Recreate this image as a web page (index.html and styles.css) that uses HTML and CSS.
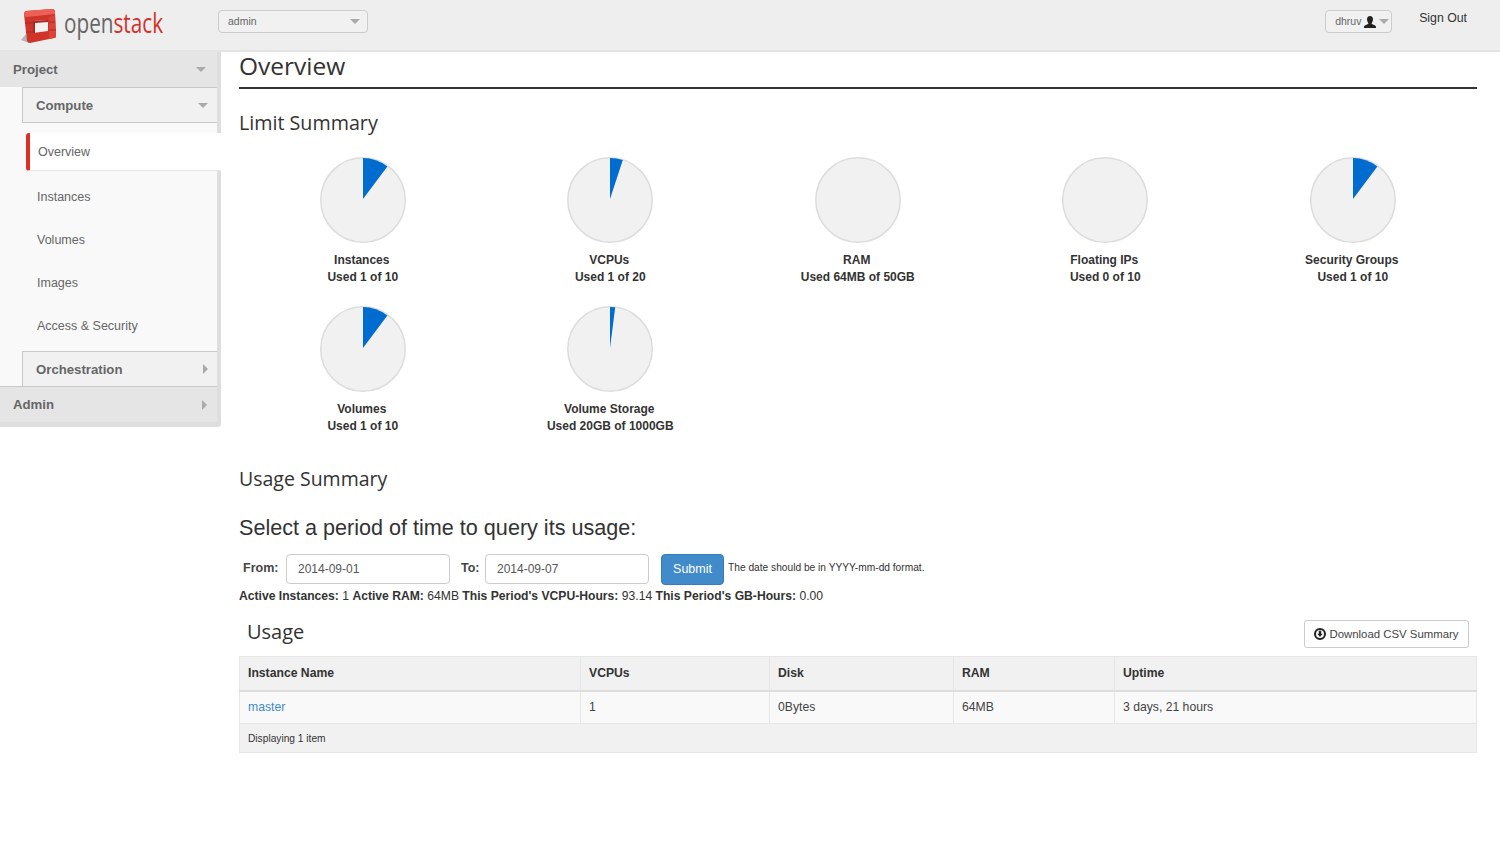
FILE: index.html
```html
<!DOCTYPE html>
<html lang="en">

<head>
  <meta charset="UTF-8">
  <title>Usage Overview - OpenStack Dashboard</title>
  <link rel="stylesheet" href="styles.css">
</head>

<body>
  <header class="topbar">
    <div class="brand">
      <svg class="brand-mark" width="38" height="36" viewBox="0 0 38 36">
        <path d="M1 32l5-6 3 9z" fill="#b5b5b5"/>
        <path d="M4 6q0-2 2-3L32 1q3 0 3 3l1 24q0 2-2 2L10 35q-2 0-3-2z" fill="#cf342a"/>
        <path d="M4 6q0-2 2-3L32 1q3 0 3 3v2L7 9q-3 0-3-3z" fill="#ee5f55"/>
        <path d="M29 9l6-2 1 21q0 2-2 2l-5 1z" fill="#dd4238"/>
        <path d="M13 13l15-1v11l-15 2z" fill="#f4f1f0"/>
        <path d="M13 13l15-1v2l-13 1v10h-2z" fill="#a92a22"/>
        <path d="M5 15h8M6 24h7M29 14h6M29 22h7" stroke="#a92a22" stroke-width="1"/>
      </svg>
      <span class="brand-name">open<span class="brand-red">stack</span></span>
    </div>
    <div class="tenant-select">admin<span class="caret"></span></div>
    <div class="topbar-right">
      <div class="user-select">dhruv
        <svg class="user-icon" width="12" height="12" viewBox="0 0 12 12"><path d="M6 0c2 0 3 1.300 3 3.300S8 6.500 7.500 7.500c.5 1 4.500 1.500 4.500 3.500v1H0v-1c0-2 4-2.500 4.500-3.500C4 6.500 3 5.300 3 3.300S4 0 6 0z" fill="#222"/></svg>
        <span class="caret"></span>
      </div>
      <a class="sign-out">Sign Out</a>
    </div>
  </header>

  <div class="layout">
    <nav class="sidebar">
      <div class="dash-head">Project<span class="caret"></span></div>
      <div class="panel-wrap">
        <div class="group-head">Compute<span class="caret"></span></div>
        <a class="nav-item active">Overview</a>
        <a class="nav-item first">Instances</a>
        <a class="nav-item">Volumes</a>
        <a class="nav-item">Images</a>
        <a class="nav-item last">Access &amp; Security</a>
        <div class="group-head closed">Orchestration<span class="caret-right"></span></div>
      </div>
      <div class="dash-head closed">Admin<span class="caret-right"></span></div>
    </nav>

    <main class="content">
      <h1 class="page-title">Overview</h1>

      <h3 class="section-title">Limit Summary</h3>
      <div class="pies">
        <div class="pie-item">
          <svg class="pie" width="86" height="86" viewBox="0 0 86 86"><circle cx="43" cy="43" r="42.250"/><path d="M43 42V1a41.500 41.500 0 0 1 24.400 8.400z"/></svg>
          <strong class="pie-name">Instances</strong><strong>Used 1 of 10</strong>
        </div>
        <div class="pie-item">
          <svg class="pie" width="86" height="86" viewBox="0 0 86 86"><circle cx="43" cy="43" r="42.250"/><path d="M43 42V1a41.500 41.500 0 0 1 12.800 2z"/></svg>
          <strong class="pie-name">VCPUs</strong><strong>Used 1 of 20</strong>
        </div>
        <div class="pie-item">
          <svg class="pie" width="86" height="86" viewBox="0 0 86 86"><circle cx="43" cy="43" r="42.250"/></svg>
          <strong class="pie-name">RAM</strong><strong>Used 64MB of 50GB</strong>
        </div>
        <div class="pie-item">
          <svg class="pie" width="86" height="86" viewBox="0 0 86 86"><circle cx="43" cy="43" r="42.250"/></svg>
          <strong class="pie-name">Floating IPs</strong><strong>Used 0 of 10</strong>
        </div>
        <div class="pie-item">
          <svg class="pie" width="86" height="86" viewBox="0 0 86 86"><circle cx="43" cy="43" r="42.250"/><path d="M43 42V1a41.500 41.500 0 0 1 24.400 8.400z"/></svg>
          <strong class="pie-name">Security Groups</strong><strong>Used 1 of 10</strong>
        </div>
        <div class="pie-item">
          <svg class="pie" width="86" height="86" viewBox="0 0 86 86"><circle cx="43" cy="43" r="42.250"/><path d="M43 42V1a41.500 41.500 0 0 1 24.400 8.400z"/></svg>
          <strong class="pie-name">Volumes</strong><strong>Used 1 of 10</strong>
        </div>
        <div class="pie-item">
          <svg class="pie" width="86" height="86" viewBox="0 0 86 86"><circle cx="43" cy="43" r="42.250"/><path d="M43 42V1a41.500 41.500 0 0 1 5.200.3z"/></svg>
          <strong class="pie-name">Volume Storage</strong><strong>Used 20GB of 1000GB</strong>
        </div>
      </div>

      <h3 class="section-title usage-title">Usage Summary</h3>
      <h2 class="query-title">Select a period of time to query its usage:</h2>
      <form class="date-form">
        <label class="from-label">From:</label>
        <input class="date-input" type="text" value="2014-09-01">
        <label class="to-label">To:</label>
        <input class="date-input" type="text" value="2014-09-07">
        <button class="submit-btn" type="button">Submit</button>
        <span class="date-hint">The date should be in YYYY-mm-dd format.</span>
      </form>
      <p class="totals"><b>Active Instances:</b> 1 <b>Active RAM:</b> 64MB <b>This Period's VCPU-Hours:</b> 93.14 <b>This Period's GB-Hours:</b> 0.00</p>

      <div class="table-head">
        <h3 class="table-title">Usage</h3>
        <a class="csv-btn">
          <svg width="12" height="12" viewBox="0 0 12 12"><circle cx="6" cy="6" r="5" fill="none" stroke="#222" stroke-width="2"/><path d="M4.800 2.800h2.400v3h1.500L6 9 3.300 5.800h1.500z" fill="#222"/></svg>
          Download CSV Summary
        </a>
      </div>
      <table class="usage-table">
        <thead>
          <tr><th class="col-name">Instance Name</th><th class="col-vcpu">VCPUs</th><th class="col-disk">Disk</th><th class="col-ram">RAM</th><th>Uptime</th></tr>
        </thead>
        <tbody>
          <tr><td><a class="link">master</a></td><td>1</td><td>0Bytes</td><td>64MB</td><td>3 days, 21 hours</td></tr>
        </tbody>
        <tfoot>
          <tr><td colspan="5">Displaying 1 item</td></tr>
        </tfoot>
      </table>
    </main>
  </div>
</body>

</html>
```

FILE: styles.css
```css
* {
  box-sizing: border-box;
}

body {
  font-family: "Liberation Sans", Arial, sans-serif;
  font-size: 13px;
  color: #333;
  background: #fff;
  margin: 0;
  height: 843px;
  overflow: hidden;
}

.caret {
  display: inline-block;
  width: 0;
  height: 0;
  border-left: 5px solid transparent;
  border-right: 5px solid transparent;
  border-top: 5px solid #aaa;
}

.caret-right {
  display: inline-block;
  width: 0;
  height: 0;
  border-top: 5px solid transparent;
  border-bottom: 5px solid transparent;
  border-left: 5px solid #aaa;
}

/* top bar */
.topbar {
  height: 52px;
  background: #eee;
  border-bottom: 2px solid #e3e3e3;
  display: flex;
  align-items: flex-start;
}

.brand {
  width: 218px;
  height: 50px;
  padding: 8px 0 0 20px;
  display: flex;
  align-items: flex-start;
  flex-shrink: 0;
}

.brand-mark {
  flex-shrink: 0;
}

.brand-name {
  font-family: "Open Sans", sans-serif;
  font-size: 28px;
  line-height: 32px;
  color: #666;
  margin: -2px 0 0 6px;
  display: inline-block;
  transform: scaleX(0.74);
  transform-origin: left top;
}

.brand-red {
  color: #d2312a;
}

.tenant-select {
  width: 150px;
  height: 23px;
  margin-top: 10px;
  padding: 0 7px 0 9px;
  background: #f1f1f1;
  border: 1px solid #ccc;
  border-radius: 4px;
  font-size: 10.500px;
  line-height: 21px;
  color: #666;
  display: flex;
  justify-content: space-between;
  align-items: center;
}

.topbar-right {
  margin-left: auto;
  display: flex;
  align-items: flex-start;
  padding-right: 33px;
}

.user-select {
  width: 67px;
  height: 23px;
  margin-top: 10px;
  padding-left: 9px;
  background: #f1f1f1;
  border: 1px solid #ccc;
  border-radius: 4px;
  font-size: 10.500px;
  line-height: 21px;
  color: #666;
  display: flex;
  align-items: center;
  gap: 3px;
}

.user-icon {
  flex-shrink: 0;
}

.sign-out {
  margin: 11px 0 0 27px;
  font-size: 12.300px;
  line-height: 15px;
  color: #333;
}

.layout {
  display: flex;
  align-items: flex-start;
}

/* sidebar */
.sidebar {
  width: 221px;
  flex-shrink: 0;
  background: #dedede;
  padding-bottom: 5px;
  padding-right: 4px;
  border-bottom-right-radius: 3px;
  font-weight: bold;
}

.dash-head {
  height: 35px;
  padding: 0 11px 0 13px;
  background: #e5e5e5;
  color: #666;
  font-size: 13.200px;
  display: flex;
  justify-content: space-between;
  align-items: center;
}

.dash-head.closed {
  height: 36px;
  padding-right: 10px;
  border-top: 1px solid #c9c9c9;
}

.panel-wrap {
  background: #f9f9f9;
  padding-left: 22px;
  font-weight: normal;
}

.group-head {
  height: 36px;
  padding: 0 9px 0 13px;
  background: #f1f1f1;
  border: solid #c9c9c9;
  border-width: 1px 0 1px 1px;
  color: #666;
  font-size: 13.200px;
  font-weight: bold;
  display: flex;
  justify-content: space-between;
  align-items: center;
}

.group-head.closed {
  height: 35px;
  border-bottom: 0;
}

.nav-item {
  display: block;
  height: 43px;
  padding-left: 15px;
  font-size: 12.500px;
  line-height: 43px;
  color: #666;
}

.nav-item.first {
  margin-top: 5px;
}

.nav-item.last {
  margin-bottom: 3px;
}

.nav-item.active {
  position: relative;
  width: 195px;
  height: 38px;
  margin: 10px 0 0 4px;
  padding-left: 8px;
  line-height: 38px;
  background: #fff;
  border-left: 4px solid #dc3024;
  border-bottom: 1px solid #e6e6e6;
  border-radius: 3px 0 0 3px;
}

/* content */
.content {
  flex: 1;
  min-width: 0;
  padding: 0 23px 0 18px;
}

.page-title {
  margin: 0;
  height: 37px;
  font-family: "Open Sans", sans-serif;
  font-size: 24.500px;
  font-weight: 400;
  line-height: 28px;
  color: #333;
  border-bottom: 2px solid #333;
}

.section-title {
  margin: 20px 0 0;
  font-family: "Open Sans", sans-serif;
  font-size: 19.700px;
  font-weight: 400;
  line-height: 28px;
  color: #333;
}

.pies {
  display: flex;
  flex-wrap: wrap;
  margin-top: 20px;
  row-gap: 15px;
}

.pie-item {
  width: 247.500px;
  height: 134px;
  display: flex;
  flex-direction: column;
  align-items: center;
  font-size: 12px;
  line-height: 17px;
  color: #333;
}

.pie-name {
  padding-right: 2px;
}

.pie {
  margin-bottom: 9px;
}

.pie circle {
  fill: #f1f1f1;
  stroke: #ddd;
  stroke-width: 1.500;
}

.pie path {
  fill: #006ccf;
}

.usage-title {
  margin-top: 25px;
  font-size: 19.500px;
}

.query-title {
  margin: 22px 0 0;
  font-size: 21.600px;
  font-weight: 400;
  line-height: 26px;
  color: #333;
}

.date-form {
  display: flex;
  align-items: center;
  margin-top: 13px;
  padding-left: 4px;
  height: 30px;
}

.date-form label {
  font-weight: bold;
  font-size: 12.500px;
  color: #444;
  margin-top: -3px;
}

.from-label {
  width: 43px;
}

.to-label {
  width: 24px;
  margin-left: 11px;
}

.date-input {
  width: 164px;
  height: 30px;
  padding: 0 11px;
  border: 1px solid #ccc;
  border-radius: 4px;
  font: 12px "Liberation Sans", Arial, sans-serif;
  color: #555;
  background: #fff;
}

.submit-btn {
  width: 63px;
  height: 31px;
  margin-left: 12px;
  background: #428bca;
  border: 1px solid #357ebd;
  border-radius: 4px;
  color: #fff;
  font: 12.500px "Liberation Sans", Arial, sans-serif;
  padding: 0;
}

.date-hint {
  margin: 0 0 3px 4px;
  font-size: 10.200px;
  color: #333;
}

.totals {
  margin: 4px 0 0;
  font-size: 12.150px;
  line-height: 16px;
  color: #333;
}

.table-head {
  display: flex;
  justify-content: space-between;
  align-items: center;
  height: 28px;
  margin-top: 16px;
  padding: 0 8px;
}

.table-title {
  margin: 0 0 6px;
  font-family: "Open Sans", sans-serif;
  font-size: 20px;
  font-weight: 400;
  color: #333;
}

.csv-btn {
  width: 165px;
  height: 28px;
  border: 1px solid #ccc;
  border-radius: 3px;
  font-size: 11.400px;
  color: #444;
  display: flex;
  align-items: center;
  justify-content: center;
  gap: 3px;
}

.usage-table {
  width: 100%;
  margin-top: 8px;
  border-collapse: collapse;
  table-layout: fixed;
}

.usage-table th,
.usage-table td {
  padding: 0 8px;
  text-align: left;
  border: 1px solid #e6e6e6;
}

.usage-table th {
  height: 34px;
  background: #f1f1f1;
  color: #333;
  font-size: 12.200px;
  border-bottom: 2px solid #ddd;
}

.usage-table tbody td {
  height: 33px;
  background: #f9f9f9;
  color: #444;
  font-size: 12.200px;
}

.usage-table tfoot td {
  height: 29px;
  background: #f1f1f1;
  font-size: 10.200px;
}

.col-name {
  width: 341px;
}

.col-vcpu {
  width: 189px;
}

.col-disk {
  width: 184px;
}

.col-ram {
  width: 161px;
}

.link {
  color: #428bca;
}
```
